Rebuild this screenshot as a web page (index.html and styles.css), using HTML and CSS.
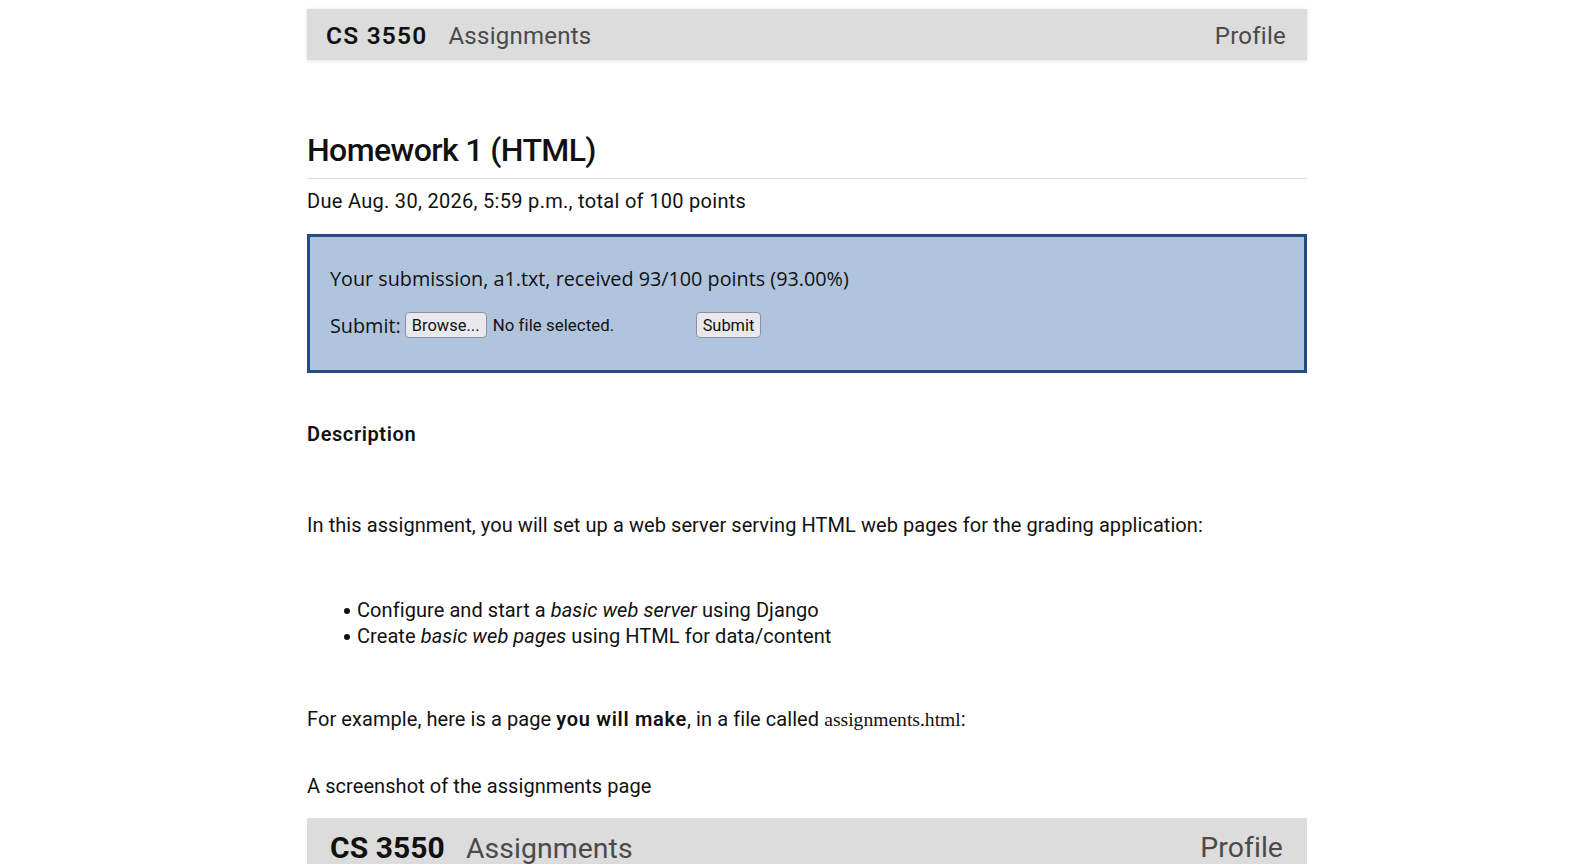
FILE: index.html
```html
<!DOCTYPE html>
<html lang="en">
<head>
<meta charset="utf-8">
<title>Homework 1 (HTML) - CS 3550</title>
<link rel="stylesheet" href="styles.css">
</head>
<body>
<div class="page">
  <header class="nav">
    <div class="nav-left">
      <a class="brand" href="#">CS 3550</a>
      <a class="nav-link" href="#">Assignments</a>
    </div>
    <a class="nav-link" href="#">Profile</a>
  </header>

  <main class="content">
    <h1 class="title">Homework 1 (HTML)</h1>
    <p class="due">Due Aug. 30, 2026, 5:59 p.m., total of 100 points</p>

    <section class="submission">
      <p class="sub-status">Your submission, a1.txt, received 93/100 points (93.00%)</p>
      <form class="sub-form">
        <span class="sub-label">Submit:</span>
        <span class="file-input">
          <span class="btn">Browse...</span>
          <span class="file-name">No file selected.</span>
        </span>
        <button class="btn" type="button">Submit</button>
      </form>
    </section>

    <h2 class="section-title">Description</h2>
    <p class="para para-intro">In this assignment, you will set up a web server serving HTML web pages for the grading application:</p>
    <ul class="goals">
      <li>Configure and start a <em>basic web server</em> using Django</li>
      <li>Create <em>basic web pages</em> using HTML for data/content</li>
    </ul>
    <p class="para para-example">For example, here is a page <strong>you will make</strong>, in a file called <code class="filename">assignments.html</code>:</p>
    <p class="para para-caption">A screenshot of the assignments page</p>

    <div class="shot">
      <div class="shot-nav">
        <div class="nav-left">
          <span class="shot-brand">CS 3550</span>
          <span class="shot-link">Assignments</span>
        </div>
        <span class="shot-link">Profile</span>
      </div>
      <div class="shot-body"></div>
    </div>
  </main>
</div>
</body>
</html>
```
FILE: styles.css
```css
html {
  overflow: hidden;
}

body {
  margin: 0;
  background: #ffffff;
  color: #111111;
  font-family: Roboto, "Noto Sans", sans-serif;
  font-size: 20px;
  letter-spacing: 0.07px;
}

.page {
  width: 1000px;
  margin: 0 0 0 307px;
  padding-top: 9px;
}

.nav {
  height: 51px;
  background: #dcdcdc;
  box-shadow: 0 1px 4px rgba(0, 0, 0, 0.12);
  display: flex;
  align-items: center;
  justify-content: space-between;
  padding: 2px 21px 0 19px;
  box-sizing: border-box;
}

.nav-left {
  display: flex;
  align-items: baseline;
  gap: 21px;
}

.nav a {
  text-decoration: none;
}

.brand {
  color: #111111;
  font-size: 24.5px;
  font-weight: 600;
  letter-spacing: 1.2px;
}

.nav-link {
  color: #4a4a4a;
  font-size: 24px;
  letter-spacing: 0.25px;
}

.content {
  display: block;
}

.title {
  margin: 71px 0 0;
  font-size: 32px;
  font-weight: 500;
  letter-spacing: -0.6px;
  line-height: 38px;
  padding-bottom: 9px;
  border-bottom: 1px solid #dddddd;
}

.due {
  margin: 10px 0 0;
  line-height: 24px;
  letter-spacing: 0.3px;
}

.submission {
  margin-top: 21px;
  background: #b0c4de;
  border: 3px solid #254a86;
  padding: 30px 21px 31px 20px;
}

.sub-status {
  margin: 0;
  line-height: 24px;
  font-family: "Open Sans", "Noto Sans", sans-serif;
  font-size: 19.8px;
  letter-spacing: 0;
}

.sub-form {
  margin-top: 20px;
  display: flex;
  align-items: center;
  height: 28px;
}

.sub-label {
  font-family: "Open Sans", "Noto Sans", sans-serif;
  font-size: 19.8px;
  letter-spacing: 0;
  margin-right: 4px;
}

.file-input {
  display: flex;
  align-items: center;
  gap: 6px;
  width: 291px;
}

.btn {
  display: inline-flex;
  align-items: center;
  box-sizing: border-box;
  height: 26px;
  padding: 0 6px;
  background: #e9e9ed;
  border: 1px solid #8f8f9d;
  border-radius: 4px;
  font-family: Roboto, sans-serif;
  font-size: 16.4px;
  color: #111111;
}

.file-name {
  font-size: 16.8px;
}

.section-title {
  margin: 49px 0 0;
  font-size: 20px;
  font-weight: 600;
  letter-spacing: 0.6px;
  line-height: 24px;
}

.para {
  margin: 0;
  line-height: 24px;
}

.para-intro {
  margin-top: 67px;
}

.goals {
  margin: 61px 0 0;
  padding-left: 50px;
  line-height: 25.5px;
  list-style: none;
}

.goals li::before {
  content: "";
  display: inline-block;
  width: 6px;
  height: 6px;
  border-radius: 50%;
  background: #111111;
  margin-left: -13px;
  margin-right: 7px;
  vertical-align: 3px;
}

.para-example {
  margin-top: 58px;
}

.para-example strong {
  font-weight: 600;
  letter-spacing: 0.7px;
}

.filename {
  font-family: "Liberation Serif", serif;
  font-size: 19.6px;
  letter-spacing: 0;
}

.para-caption {
  margin-top: 42px;
}

.shot {
  margin-top: 20px;
  background: #ffffff;
}

.shot-nav {
  height: 58px;
  background: #dcdcdc;
  display: flex;
  align-items: center;
  justify-content: space-between;
  padding: 0 24px 0 23px;
}

.shot-brand {
  font-size: 30px;
  font-weight: 700;
  color: #111111;
}

.shot-link {
  font-size: 28.4px;
  color: #4a4a4a;
}

.shot-body {
  height: 200px;
}
```
